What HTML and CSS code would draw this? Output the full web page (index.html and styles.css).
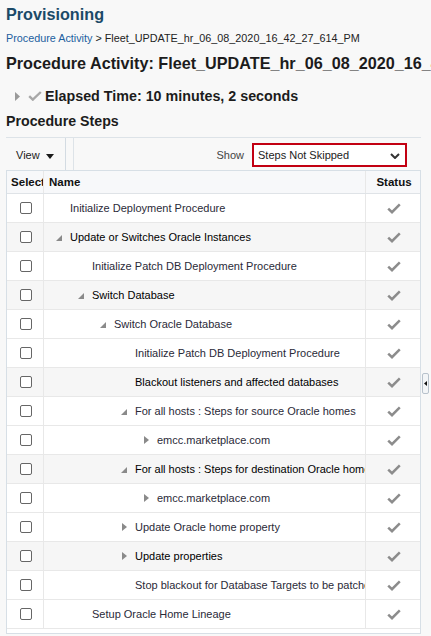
FILE: index.html
```html
<!DOCTYPE html>
<html lang="en">
<head>
<meta charset="utf-8">
<title>Provisioning</title>
<link rel="stylesheet" href="styles.css">
</head>
<body>
<div class="page">
  <h1 class="title">Provisioning</h1>
  <div class="crumbs"><a class="crumb-link" href="#">Procedure Activity</a> &gt; Fleet_UPDATE_hr_06_08_2020_16_42_27_614_PM</div>
  <h2 class="activity">Procedure Activity: Fleet_UPDATE_hr_06_08_2020_16_42_27_614_PM</h2>
  <div class="elapsed">
    <svg class="el-tri" width="5" height="9" viewBox="0 0 5 9"><polygon points="0,0 5,4.5 0,9" fill="#9a9a9a"/></svg>
    <svg class="el-check" width="14" height="10" viewBox="0 0 14 10"><path d="M1.2 5.2 L4.8 8.6 L12.8 1" fill="none" stroke="#a8a8a8" stroke-width="2.4"/></svg>
    <span>Elapsed Time: 10 minutes, 2 seconds</span>
  </div>
  <div class="section-head">Procedure Steps</div>
  <div class="toolbar">
    <div class="view-menu">View <svg class="view-caret" width="8" height="5" viewBox="0 0 8 5"><polygon points="0,0 8,0 4,5" fill="#1a1a1a"/></svg></div>
    <div class="tb-sep"></div>
    <div class="tb-spacer"></div>
    <span class="show-label">Show</span>
    <div class="show-select">
      <span>Steps Not Skipped</span>
      <svg class="chev" width="10" height="6" viewBox="0 0 10 6"><path d="M1 1 L5 5 L9 1" fill="none" stroke="#333" stroke-width="2"/></svg>
    </div>
  </div>
  <div class="table-wrap">
    <div class="row head">
      <div class="cell c-sel">Select</div>
      <div class="cell c-name">Name</div>
      <div class="cell c-stat">Status</div>
    </div>

    <div class="row">
      <div class="cell c-sel"><span class="cb"></span></div>
      <div class="cell c-name l0">Initialize Deployment Procedure</div>
      <div class="cell c-stat"><svg class="ok" width="14" height="11" viewBox="0 0 14 11"><path d="M1.2 5.6 L5 9.2 L12.8 1.4" fill="none" stroke="#8c8c8c" stroke-width="2.5"/></svg></div>
    </div>
    <div class="row alt">
      <div class="cell c-sel"><span class="cb"></span></div>
      <div class="cell c-name l0"><span class="tw open"></span>Update or Switches Oracle Instances</div>
      <div class="cell c-stat"><svg class="ok" width="14" height="11" viewBox="0 0 14 11"><path d="M1.2 5.6 L5 9.2 L12.8 1.4" fill="none" stroke="#8c8c8c" stroke-width="2.5"/></svg></div>
    </div>
    <div class="row">
      <div class="cell c-sel"><span class="cb"></span></div>
      <div class="cell c-name l1">Initialize Patch DB Deployment Procedure</div>
      <div class="cell c-stat"><svg class="ok" width="14" height="11" viewBox="0 0 14 11"><path d="M1.2 5.6 L5 9.2 L12.8 1.4" fill="none" stroke="#8c8c8c" stroke-width="2.5"/></svg></div>
    </div>
    <div class="row alt">
      <div class="cell c-sel"><span class="cb"></span></div>
      <div class="cell c-name l1"><span class="tw open"></span>Switch Database</div>
      <div class="cell c-stat"><svg class="ok" width="14" height="11" viewBox="0 0 14 11"><path d="M1.2 5.6 L5 9.2 L12.8 1.4" fill="none" stroke="#8c8c8c" stroke-width="2.5"/></svg></div>
    </div>
    <div class="row">
      <div class="cell c-sel"><span class="cb"></span></div>
      <div class="cell c-name l2"><span class="tw open"></span>Switch Oracle Database</div>
      <div class="cell c-stat"><svg class="ok" width="14" height="11" viewBox="0 0 14 11"><path d="M1.2 5.6 L5 9.2 L12.8 1.4" fill="none" stroke="#8c8c8c" stroke-width="2.5"/></svg></div>
    </div>
    <div class="row">
      <div class="cell c-sel"><span class="cb"></span></div>
      <div class="cell c-name l3">Initialize Patch DB Deployment Procedure</div>
      <div class="cell c-stat"><svg class="ok" width="14" height="11" viewBox="0 0 14 11"><path d="M1.2 5.6 L5 9.2 L12.8 1.4" fill="none" stroke="#8c8c8c" stroke-width="2.5"/></svg></div>
    </div>
    <div class="row alt">
      <div class="cell c-sel"><span class="cb"></span></div>
      <div class="cell c-name l3">Blackout listeners and affected databases</div>
      <div class="cell c-stat"><svg class="ok" width="14" height="11" viewBox="0 0 14 11"><path d="M1.2 5.6 L5 9.2 L12.8 1.4" fill="none" stroke="#8c8c8c" stroke-width="2.5"/></svg></div>
    </div>
    <div class="row">
      <div class="cell c-sel"><span class="cb"></span></div>
      <div class="cell c-name l3"><span class="tw open"></span>For all hosts : Steps for source Oracle homes</div>
      <div class="cell c-stat"><svg class="ok" width="14" height="11" viewBox="0 0 14 11"><path d="M1.2 5.6 L5 9.2 L12.8 1.4" fill="none" stroke="#8c8c8c" stroke-width="2.5"/></svg></div>
    </div>
    <div class="row">
      <div class="cell c-sel"><span class="cb"></span></div>
      <div class="cell c-name l4"><span class="tw closed"></span>emcc.marketplace.com</div>
      <div class="cell c-stat"><svg class="ok" width="14" height="11" viewBox="0 0 14 11"><path d="M1.2 5.6 L5 9.2 L12.8 1.4" fill="none" stroke="#8c8c8c" stroke-width="2.5"/></svg></div>
    </div>
    <div class="row alt">
      <div class="cell c-sel"><span class="cb"></span></div>
      <div class="cell c-name l3"><span class="tw open"></span>For all hosts : Steps for destination Oracle homes</div>
      <div class="cell c-stat"><svg class="ok" width="14" height="11" viewBox="0 0 14 11"><path d="M1.2 5.6 L5 9.2 L12.8 1.4" fill="none" stroke="#8c8c8c" stroke-width="2.5"/></svg></div>
    </div>
    <div class="row">
      <div class="cell c-sel"><span class="cb"></span></div>
      <div class="cell c-name l4"><span class="tw closed"></span>emcc.marketplace.com</div>
      <div class="cell c-stat"><svg class="ok" width="14" height="11" viewBox="0 0 14 11"><path d="M1.2 5.6 L5 9.2 L12.8 1.4" fill="none" stroke="#8c8c8c" stroke-width="2.5"/></svg></div>
    </div>
    <div class="row">
      <div class="cell c-sel"><span class="cb"></span></div>
      <div class="cell c-name l3"><span class="tw closed"></span>Update Oracle home property</div>
      <div class="cell c-stat"><svg class="ok" width="14" height="11" viewBox="0 0 14 11"><path d="M1.2 5.6 L5 9.2 L12.8 1.4" fill="none" stroke="#8c8c8c" stroke-width="2.5"/></svg></div>
    </div>
    <div class="row alt">
      <div class="cell c-sel"><span class="cb"></span></div>
      <div class="cell c-name l3"><span class="tw closed"></span>Update properties</div>
      <div class="cell c-stat"><svg class="ok" width="14" height="11" viewBox="0 0 14 11"><path d="M1.2 5.6 L5 9.2 L12.8 1.4" fill="none" stroke="#8c8c8c" stroke-width="2.5"/></svg></div>
    </div>
    <div class="row">
      <div class="cell c-sel"><span class="cb"></span></div>
      <div class="cell c-name l3">Stop blackout for Database Targets to be patched</div>
      <div class="cell c-stat"><svg class="ok" width="14" height="11" viewBox="0 0 14 11"><path d="M1.2 5.6 L5 9.2 L12.8 1.4" fill="none" stroke="#8c8c8c" stroke-width="2.5"/></svg></div>
    </div>
    <div class="row">
      <div class="cell c-sel"><span class="cb"></span></div>
      <div class="cell c-name l1">Setup Oracle Home Lineage</div>
      <div class="cell c-stat"><svg class="ok" width="14" height="11" viewBox="0 0 14 11"><path d="M1.2 5.6 L5 9.2 L12.8 1.4" fill="none" stroke="#8c8c8c" stroke-width="2.5"/></svg></div>
    </div>
  </div>
</div>
<div class="splitter"><svg width="3" height="5" viewBox="0 0 3 5"><polygon points="3,0 0,2.5 3,5" fill="#111"/></svg></div>
</body>
</html>
```

FILE: styles.css
```css
html, body {
  margin: 0;
  padding: 0;
  overflow: hidden;
}
body {
  background: #f8f8f8;
  font-family: "Liberation Sans", Arial, sans-serif;
  color: #222;
  width: 431px;
  height: 636px;
  position: relative;
}
.page {
  margin-left: 6px;
  width: 415px;
}
.title {
  margin: 0;
  font-size: 16.2px;
  line-height: 28px;
  font-weight: bold;
  color: #1b4a68;
  white-space: nowrap;
}
.crumbs {
  font-size: 10.8px;
  line-height: 20px;
  color: #222;
  white-space: nowrap;
}
.crumb-link {
  color: #1c5f9f;
  text-decoration: none;
}
.activity {
  margin: 0;
  font-size: 16.2px;
  line-height: 30px;
  font-weight: bold;
  color: #1c1c1c;
  white-space: nowrap;
}
.elapsed {
  height: 34px;
  display: flex;
  align-items: center;
  padding-left: 9px;
  padding-top: 2px;
  box-sizing: border-box;
  font-size: 14.3px;
  font-weight: bold;
  color: #1c1c1c;
  white-space: nowrap;
}
.el-tri {
  margin-right: 8px;
}
.el-check {
  margin-right: 3px;
}
.section-head {
  font-size: 14.2px;
  font-weight: bold;
  line-height: 18px;
  color: #1c1c1c;
  padding-bottom: 7px;
  border-bottom: 1px solid #dde3e8;
}
.toolbar {
  height: 32px;
  display: flex;
  align-items: center;
  font-size: 11px;
  color: #222;
  padding-top: 2px;
  box-sizing: border-box;
}
.view-menu {
  padding-left: 10px;
  display: flex;
  align-items: center;
  width: 49px;
}
.view-caret {
  margin-left: 6px;
  margin-top: 2px;
}
.tb-sep {
  align-self: stretch;
  margin-top: -2px;
  width: 7px;
  border-left: 1px solid #d3dbe2;
  border-right: 1px solid #dde3e8;
}
.tb-spacer {
  flex: 1;
}
.show-label {
  color: #444;
  margin-right: 8px;
}
.show-select {
  box-sizing: border-box;
  width: 155px;
  height: 24px;
  border: 2px solid #c20012;
  background: #fff;
  display: flex;
  align-items: center;
  justify-content: space-between;
  padding: 0 5px 0 4px;
  margin-right: 14px;
  color: #222;
}
.chev {
  margin-top: 1px;
}
.table-wrap {
  border: 1px solid #d7dfe6;
  background: #fff;
  padding-bottom: 4px;
}
.row {
  display: grid;
  grid-template-columns: 37px 322px 54px;
  height: 29px;
  border-bottom: 1px solid #e8e8e8;
  box-sizing: border-box;
  font-size: 11px;
  color: #2a2a38;
}
.row.alt {
  background: #f6f6f6;
  color: #000;
}
.row.head {
  height: 23px;
  background: #f7f8fa;
  border-bottom: 1px solid #dfe3e7;
  font-weight: bold;
  font-size: 11.5px;
  color: #111;
}
.cell {
  display: flex;
  align-items: center;
  overflow: hidden;
  white-space: nowrap;
  border-right: 1px solid #e8e8e8;
}
.c-stat {
  border-right: none;
  justify-content: center;
}
.head .c-sel {
  padding-left: 6px;
}
.head .c-name {
  padding-left: 5px;
}
.head .c-stat {
  padding-left: 2px;
}
.row .c-sel {
  justify-content: center;
}
.cb {
  width: 10px;
  height: 10px;
  border: 1px solid #666;
  border-radius: 2px;
  background: #fff;
  margin-left: 1px;
}
.ok {
  margin-left: 1px;
}
.c-name.l0 { padding-left: 26px; }
.c-name.l1 { padding-left: 48px; }
.c-name.l2 { padding-left: 70px; }
.c-name.l3 { padding-left: 91px; }
.c-name.l4 { padding-left: 113px; }
.tw {
  width: 14px;
  margin-left: -14px;
  display: inline-flex;
  align-items: center;
  height: 10px;
  flex: none;
}
.tw.open::before {
  content: "";
  width: 0;
  height: 0;
  border-style: solid;
  border-width: 0 0 6px 6px;
  border-color: transparent transparent #8a8a8a transparent;
  margin-top: 1px;
}
.tw.closed::before {
  content: "";
  width: 0;
  height: 0;
  border-style: solid;
  border-width: 4px 0 4px 5px;
  border-color: transparent transparent transparent #8a8a8a;
  margin-left: 1px;
}
.splitter {
  position: absolute;
  left: 422px;
  top: 373px;
  width: 5px;
  height: 19px;
  border: 1px solid #b8c2cc;
  border-radius: 2px;
  background: #f3f5f7;
  display: flex;
  align-items: center;
  justify-content: center;
}
```
